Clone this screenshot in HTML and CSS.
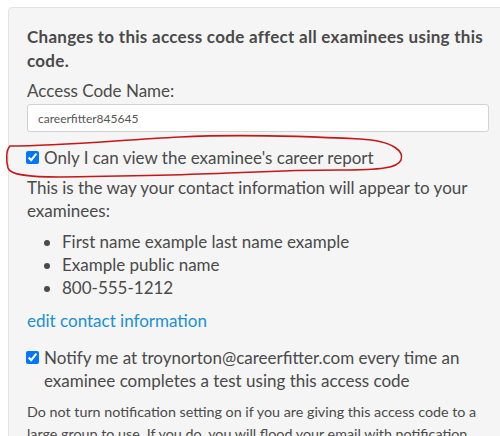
FILE: index.html
```html
<!DOCTYPE html>
<html>
<head>
<meta charset="utf-8">
<link rel="stylesheet" href="styles.css">
</head>
<body>
<div class="panel">
  <h4 class="heading">Changes to this access code affect all examinees using this code.</h4>
  <label class="label" for="name">Access Code Name:</label>
  <input id="name" class="field" type="text" value="careerfitter845645">
  <div class="check-row first">
    <input type="checkbox" checked>
    <span>Only I can view the examinee's career report</span>
  </div>
  <p class="intro">This is the way your contact information will appear to your examinees:</p>
  <ul class="contact">
    <li>First name example last name example</li>
    <li>Example public name</li>
    <li>800-555-1212</li>
  </ul>
  <a class="edit" href="#">edit contact information</a>
  <div class="check-row second">
    <input type="checkbox" checked>
    <span>Notify me at troynorton@careerfitter.com every time an examinee completes a test using this access code</span>
  </div>
  <p class="note">Do not turn notification setting on if you are giving this access code to a large group to use. If you do, you will flood your email with notification messages.</p>
  <svg class="scribble" width="420" height="50" viewBox="0 130 420 50">
    <path d="M10,146 C60,146 120,140 180,137 C240,134 300,136 360,139 C395,141 404,152 401,160 C398,168 380,170 340,170 C280,170 240,173 200,174 C150,176 110,176 60,177 C30,177 10,175 8,168 C6,160 6,150 10,146 Z" fill="none" stroke="#c41818" stroke-width="1.6"/>
  </svg>
</div>
</body>
</html>
```
FILE: styles.css
```css
html, body {
  margin: 0;
  padding: 0;
  overflow: hidden;
  background: #fff;
}
body {
  font-family: Lato, "Liberation Sans", sans-serif;
  color: #4a4a4a;
  font-size: 17px;
}
.panel {
  margin: 7px 0 0 8px;
  width: 480px;
  padding: 17px 40px 20px 18px;
  background: #f5f5f5;
  border: 1px solid #e3e3e3;
  border-radius: 4px;
}
.heading {
  margin: 0;
  font-size: 17px;
  line-height: 24px;
  font-weight: bold;
  letter-spacing: 0.28px;
}
.label {
  display: block;
  margin-top: 6px;
  line-height: 24px;
}
.field {
  display: block;
  box-sizing: border-box;
  width: 462px;
  height: 28px;
  margin-top: 1px;
  padding: 0 10px;
  border: 1px solid #d2d2d2;
  border-radius: 3px;
  background: #fff;
  font-family: Lato, "Liberation Sans", sans-serif;
  font-size: 12px;
  color: #555;
}
.check-row {
  display: flex;
  align-items: flex-start;
  gap: 5px;
  line-height: 23px;
}
.check-row input {
  width: 13px;
  height: 13px;
  margin: 5px 0 0 -1px;
  flex: none;
}
.first {
  margin-top: 14px;
}
.second {
  margin-top: 14px;
}
.intro {
  margin: 7px 0 0 0;
  line-height: 23px;
}
.contact {
  margin: 8px 0 0 0;
  padding-left: 35px;
  line-height: 23px;
}
.edit {
  display: block;
  margin-top: 10px;
  line-height: 23px;
  color: #1a8fd6;
  text-decoration: none;
}
.note {
  margin: 9px 0 0 0;
  font-size: 14.3px;
  line-height: 22px;
}
.scribble {
  position: absolute;
  left: 0;
  top: 130px;
}
```
